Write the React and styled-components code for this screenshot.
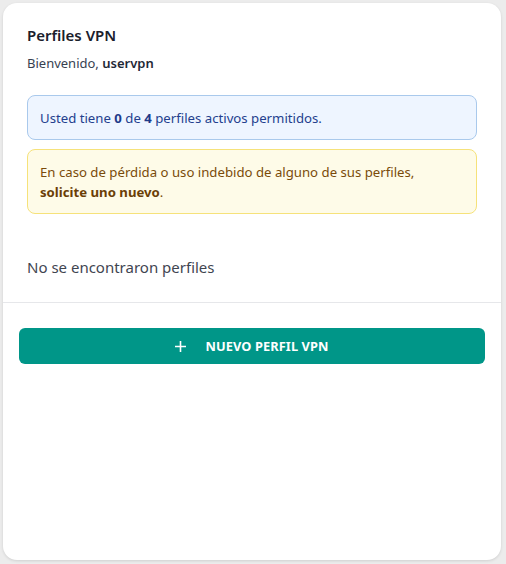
import React from "react";
import styled, { createGlobalStyle } from "styled-components";

const GlobalStyle = createGlobalStyle`
    html, body {
        margin: 0;
        padding: 0;
        background: #ececec;
        font-family: "Noto Sans", "Open Sans", Arial, sans-serif;
    }
`;

const Page = styled.div`
    padding: 3px 5px 4px 3px;
`;

const Card = styled.div`
    height: 557px;
    background: #ffffff;
    border-radius: 14px;
    box-shadow: 0 1px 3px rgba(0, 0, 0, 0.12);
    display: flex;
    flex-direction: column;
`;

const Header = styled.div`
    padding: 22px 24px 0;
`;

const Title = styled.h1`
    margin: 0;
    font-size: 15px;
    line-height: 20px;
    font-weight: 600;
    color: #1a202c;
`;

const Welcome = styled.p`
    margin: 8px 0 0;
    font-size: 13px;
    line-height: 20px;
    color: #374151;

    b {
        font-weight: 600;
        color: #1f2937;
    }
`;

const Alerts = styled.div`
    display: flex;
    flex-direction: column;
    gap: 9px;
    margin-top: 22px;
`;

const Alert = styled.div`
    border: 1px solid ${(p) => (p.$tone === "warn" ? "#f6e27a" : "#a9c9ec")};
    background: ${(p) => (p.$tone === "warn" ? "#fefbe8" : "#eef5ff")};
    color: ${(p) => (p.$tone === "warn" ? "#7a4b0a" : "#23408e")};
    border-radius: 8px;
    padding: 12px 12px 11px;
    font-size: 13.2px;
    line-height: 20px;

    b {
        font-weight: 700;
        color: ${(p) => (p.$tone === "warn" ? "#6b3e06" : "#1e3a8a")};
    }
`;

const Empty = styled.p`
    margin: 0;
    padding: 42px 24px 24px;
    font-size: 15px;
    line-height: 22px;
    color: #3f4551;
`;

const Footer = styled.div`
    border-top: 1px solid #e6e7ea;
    padding: 25px 16px;
`;

const Button = styled.button`
    width: 100%;
    height: 36px;
    border: none;
    border-radius: 6px;
    background: #009688;
    color: #ffffff;
    display: flex;
    align-items: center;
    justify-content: center;
    gap: 19px;
    font-family: inherit;
    font-size: 12.8px;
    font-weight: 700;
    letter-spacing: 0.1px;
    text-transform: uppercase;
    cursor: pointer;
`;

const Plus = styled.svg`
    width: 11px;
    height: 11px;
`;

export default function App() {
    return (
        <>
            <GlobalStyle />
            <Page>
                <Card>
                    <Header>
                        <Title>Perfiles VPN</Title>
                        <Welcome>
                            Bienvenido, <b>uservpn</b>
                        </Welcome>
                        <Alerts>
                            <Alert>
                                Usted tiene <b>0</b> de <b>4</b> perfiles activos permitidos.
                            </Alert>
                            <Alert $tone="warn">
                                En caso de pérdida o uso indebido de alguno de sus perfiles,{" "}
                                <b>solicite uno nuevo</b>.
                            </Alert>
                        </Alerts>
                    </Header>
                    <Empty>No se encontraron perfiles</Empty>
                    <Footer>
                        <Button>
                            <Plus viewBox="0 0 11 11">
                                <path d="M5.5 0v11M0 5.5h11" stroke="#fff" strokeWidth="1.6" />
                            </Plus>
                            Nuevo perfil VPN
                        </Button>
                    </Footer>
                </Card>
            </Page>
        </>
    );
}
